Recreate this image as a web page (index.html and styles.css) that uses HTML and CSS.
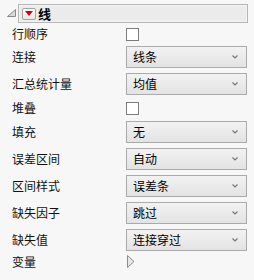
FILE: index.html
```html
<!DOCTYPE html>
<html lang="zh-CN">
  <head>
    <meta charset="UTF-8" />
    <meta name="viewport" content="width=device-width, initial-scale=1.0" />
    <title>线</title>
    <link rel="stylesheet" href="styles.css">
  </head>
  <body>
    <div class="panel">
      <div class="panel-head">
        <svg class="disclosure" width="9" height="8" viewBox="0 0 9 8">
          <polygon points="8.5,0.5 8.5,7.5 0.5,7.5" fill="#d8d8d8" stroke="#8a8a8a" />
        </svg>
        <div class="title-box">
          <span class="menu-btn">
            <svg width="8" height="5" viewBox="0 0 8 5">
              <polygon points="0,0 8,0 4,5" fill="#d40000" />
            </svg>
          </span>
          <span class="title">线</span>
        </div>
      </div>

      <div class="options">
        <div class="row check-row first">
          <span class="label">行顺序</span>
          <span class="checkbox"></span>
        </div>
        <div class="row">
          <span class="label">连接</span>
          <div class="select"><span>线条</span><svg class="chevron" width="6" height="4" viewBox="0 0 6 4"><polyline points="0.5,0.5 3,3 5.5,0.5" /></svg></div>
        </div>
        <div class="row">
          <span class="label">汇总统计量</span>
          <div class="select"><span>均值</span><svg class="chevron" width="6" height="4" viewBox="0 0 6 4"><polyline points="0.5,0.5 3,3 5.5,0.5" /></svg></div>
        </div>
        <div class="row check-row">
          <span class="label">堆叠</span>
          <span class="checkbox"></span>
        </div>
        <div class="row">
          <span class="label">填充</span>
          <div class="select"><span>无</span><svg class="chevron" width="6" height="4" viewBox="0 0 6 4"><polyline points="0.5,0.5 3,3 5.5,0.5" /></svg></div>
        </div>
        <div class="row">
          <span class="label">误差区间</span>
          <div class="select"><span>自动</span><svg class="chevron" width="6" height="4" viewBox="0 0 6 4"><polyline points="0.5,0.5 3,3 5.5,0.5" /></svg></div>
        </div>
        <div class="row">
          <span class="label">区间样式</span>
          <div class="select"><span>误差条</span><svg class="chevron" width="6" height="4" viewBox="0 0 6 4"><polyline points="0.5,0.5 3,3 5.5,0.5" /></svg></div>
        </div>
        <div class="row">
          <span class="label">缺失因子</span>
          <div class="select"><span>跳过</span><svg class="chevron" width="6" height="4" viewBox="0 0 6 4"><polyline points="0.5,0.5 3,3 5.5,0.5" /></svg></div>
        </div>
        <div class="row">
          <span class="label">缺失值</span>
          <div class="select"><span>连接穿过</span><svg class="chevron" width="6" height="4" viewBox="0 0 6 4"><polyline points="0.5,0.5 3,3 5.5,0.5" /></svg></div>
        </div>
        <div class="row var-row">
          <span class="label">变量</span>
          <svg class="expand" width="8" height="13" viewBox="0 0 8 13">
            <polygon points="0.5,0.5 7,6.5 0.5,12.5" fill="#e6e6e6" stroke="#8c8c8c" />
          </svg>
        </div>
      </div>
    </div>
  </body>
</html>
```

FILE: styles.css
```css
html, body {
  margin: 0;
  background: #f7f7f7;
}
body {
  font-family: "Noto Sans CJK SC", "Noto Sans", sans-serif;
  font-size: 12px;
  color: #111;
  width: 254px;
  height: 280px;
  overflow: hidden;
}
.panel-head {
  display: flex;
  align-items: center;
  padding: 4px 0 0 7px;
}
.disclosure {
  margin-right: 2px;
  margin-top: -1px;
}
.title-box {
  display: flex;
  align-items: center;
  box-sizing: border-box;
  width: 230px;
  height: 19px;
  padding-left: 3px;
  border: 1px solid #b6b6b6;
  box-shadow: inset 0 0 0 1px #f3f3f3;
  background: #ebebeb;
}
.menu-btn {
  display: flex;
  align-items: center;
  justify-content: center;
  box-sizing: border-box;
  width: 14px;
  height: 12px;
  border: 1px solid #a4a4a4;
  border-radius: 2px;
  background: linear-gradient(#ffffff, #e6e6e6);
}
.title {
  margin-left: 2px;
  font-weight: bold;
  font-size: 13px;
  line-height: 1;
  color: #000;
}
.options {
  display: flex;
  flex-direction: column;
  gap: 5px;
  padding: 4px 0 0 12px;
}
.row {
  display: flex;
  align-items: center;
  height: 22px;
}
.check-row {
  height: 16px;
}
.check-row.first {
  height: 14px;
}
.var-row {
  height: 13px;
  margin-top: -1px;
}
.label {
  width: 114px;
  line-height: 1;
}
.checkbox {
  box-sizing: border-box;
  width: 13px;
  height: 13px;
  border: 1px solid #7c7c7c;
  background: #fff;
}
.select {
  display: flex;
  align-items: center;
  justify-content: space-between;
  box-sizing: border-box;
  width: 121px;
  height: 22px;
  padding: 0 8px 0 6px;
  border: 1px solid #aaaaaa;
  background: linear-gradient(#f2f2f2, #e3e3e3);
  color: #000;
  line-height: 1;
}
.chevron {
  fill: none;
  stroke: #777;
  stroke-width: 1.2;
}
.expand {
  margin-left: 1px;
}
```
